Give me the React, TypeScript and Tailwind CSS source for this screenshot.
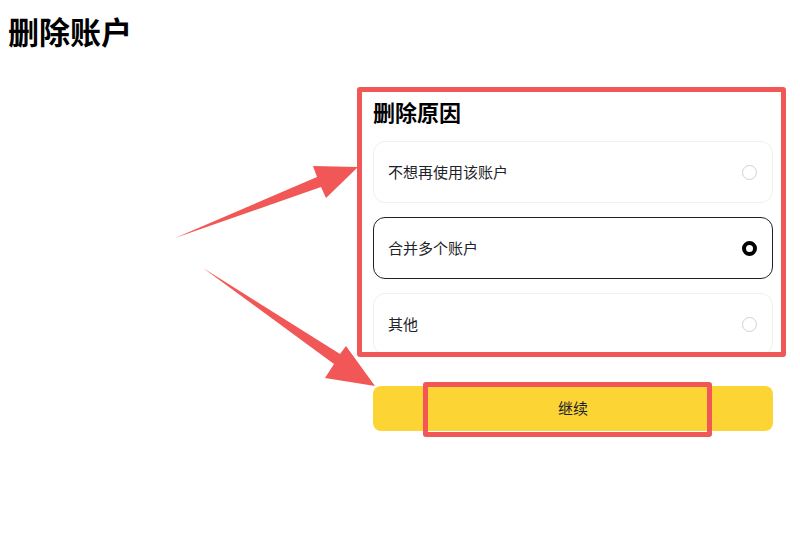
import { useState } from "react";

const reasons = ["不想再使用该账户", "合并多个账户", "其他"];

function Radio({ checked }: { checked: boolean }) {
  return checked ? (
    <span className="block h-[15px] w-[15px] rounded-full border-[4px] border-black bg-white" />
  ) : (
    <span className="block h-[15px] w-[15px] rounded-full border border-[#cfd2d6] bg-white" />
  );
}

function Arrows() {
  return (
    <svg
      className="pointer-events-none absolute left-0 top-0"
      width="800"
      height="545"
      viewBox="0 0 800 545"
    >
      <polygon
        fill="#f25757"
        points="175,238 317,177 313,166 358,167 326,198 321,187"
      />
      <polygon
        fill="#f25757"
        points="203,268 340,354 346,346 375,386 325,378 334,364"
      />
    </svg>
  );
}

export default function App() {
  const [selected, setSelected] = useState(1);

  return (
    <div className="relative h-[545px] w-[800px] overflow-hidden bg-white font-['Noto_Sans_CJK_SC','Noto_Sans',sans-serif] text-[#1e2329]">
      <h1 className="pl-2 pt-3 text-[31px] font-bold leading-[38px] text-black">
        删除账户
      </h1>

      <div className="mt-[46px] flex justify-end pr-[27px]">
        <div className="relative w-[400px]">
          <div className="h-[258px] overflow-hidden">
            <h2 className="text-[22px] font-bold leading-[30px] text-black">
              删除原因
            </h2>
            <div className="mt-[15px] flex flex-col gap-[14px]">
              {reasons.map((r, i) => (
                <div
                  key={r}
                  onClick={() => setSelected(i)}
                  className={
                    selected === i
                      ? "flex h-[62px] shrink-0 cursor-pointer items-center justify-between rounded-xl border border-[#1e2329] pl-[14px] pr-[15px]"
                      : "flex h-[62px] shrink-0 cursor-pointer items-center justify-between rounded-xl border border-[#eef0f2] pl-[14px] pr-[15px]"
                  }
                >
                  <span className="text-[15px] leading-[20px]">{r}</span>
                  <Radio checked={selected === i} />
                </div>
              ))}
            </div>
          </div>

          <button className="mt-[32px] h-[45px] w-full rounded-lg bg-[#fcd535] text-[15px] text-[#1e2329]">
            继续
          </button>

          <div className="pointer-events-none absolute left-[-16px] top-[-9px] h-[270px] w-[429px] rounded-[3px] border-[5px] border-[#f25757]" />
          <div className="pointer-events-none absolute left-[50px] top-[286px] h-[55px] w-[289px] rounded-[3px] border-[5px] border-[#f25757]" />
        </div>
      </div>

      <Arrows />
    </div>
  );
}
